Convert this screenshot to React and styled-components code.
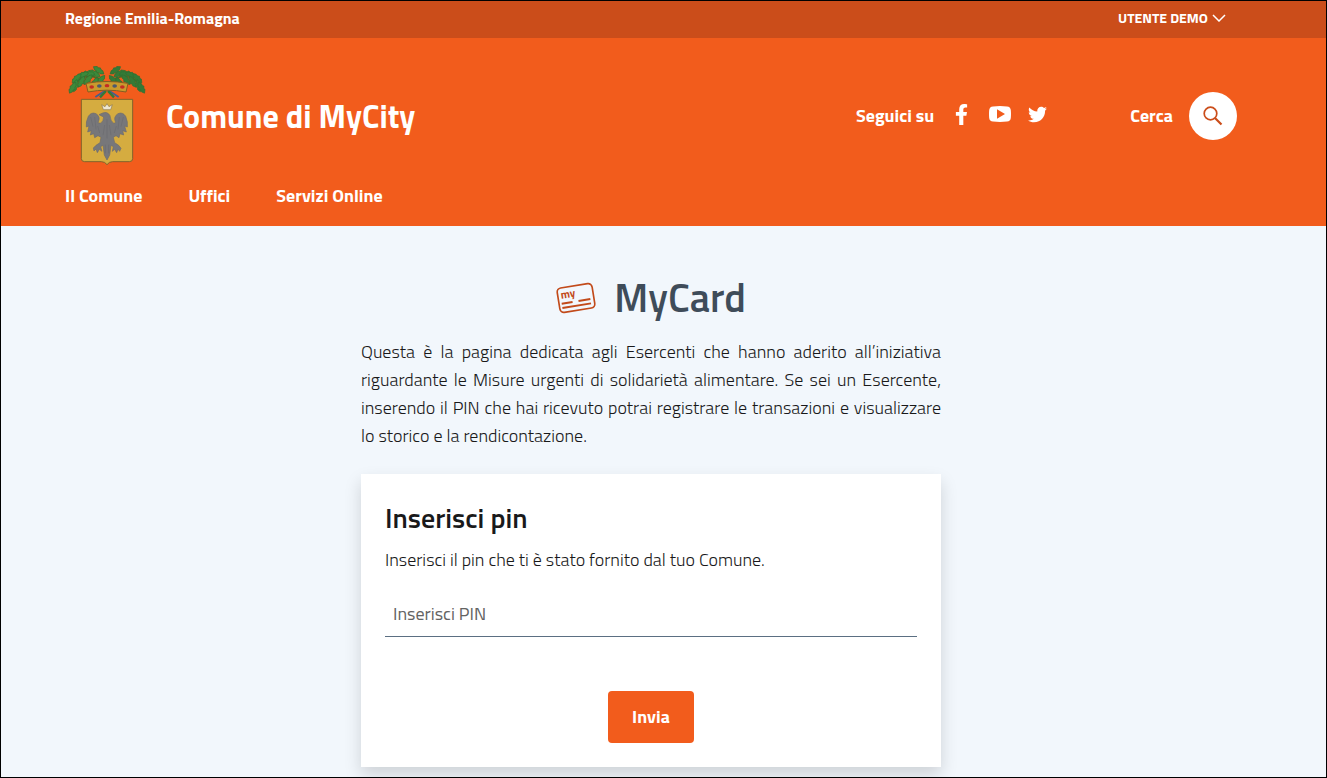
import React, { useState } from 'react';
import styled, { createGlobalStyle, ThemeProvider } from 'styled-components';
import { FaFacebookF, FaTwitter } from 'react-icons/fa';

const theme = {
  primary: '#f25c1c',
  primaryDark: '#cb4d1a',
  iconRed: '#c24a1a',
  white: '#fff',
  text: '#19191a',
  title: '#3f4c59',
  muted: '#636363',
  line: '#5b6f82',
  background: '#f2f7fc',
};

const navigationItems = [
  { label: 'Il Comune', path: '#comune' },
  { label: 'Uffici', path: '#uffici' },
  { label: 'Servizi Online', path: '#servizi' },
];

const GlobalStyle = createGlobalStyle`
  *, *::before, *::after {
    box-sizing: border-box;
  }
  body {
    margin: 0;
    font-family: 'Titillium Web', Roboto, sans-serif;
    font-size: 18px;
    line-height: 28px;
    color: ${props => props.theme.text};
  }
  h1, h2, p {
    margin: 0;
  }
  a {
    color: inherit;
    text-decoration: none;
  }
  button, input {
    font: inherit;
  }
`;

const Page = styled.div`
  min-height: 100vh;
  display: flex;
  flex-direction: column;
  border: 1px solid #000;
  background-color: ${props => props.theme.background};
`;

const Container = styled.div`
  padding: 0 89px 0 64px;
`;

const TopBar = styled.div`
  background-color: ${props => props.theme.primaryDark};
  color: ${props => props.theme.white};
`;

const TopBarContent = styled(Container)`
  display: flex;
  align-items: center;
  justify-content: space-between;
  height: 37px;
  padding-bottom: 4px;
`;

const RegionLink = styled.a`
  font-size: 16px;
  font-weight: 700;
`;

const UserButton = styled.button`
  display: flex;
  align-items: center;
  gap: 4px;
  padding: 0 11px;
  border: none;
  background-color: transparent;
  color: inherit;
  font-size: 14px;
  font-weight: 700;
  text-transform: uppercase;
  cursor: pointer;
`;

const HeaderContainer = styled.header`
  background-color: ${props => props.theme.primary};
  color: ${props => props.theme.white};
  font-weight: 700;
`;

const Brand = styled(Container)`
  display: flex;
  align-items: center;
  justify-content: space-between;
  padding-top: 27px;
`;

const BrandLink = styled.a`
  display: flex;
  align-items: center;
  gap: 19px;
  font-size: 32px;
  line-height: 40px;
`;

const HeaderTools = styled.div`
  display: flex;
  align-items: center;
  gap: 83px;
`;

const Social = styled.div`
  display: flex;
  align-items: center;
`;

const SocialList = styled.ul`
  display: flex;
  align-items: center;
  gap: 17px;
  margin: 0;
  padding: 0 0 4px 17px;
  list-style: none;
`;

const SocialLink = styled.a`
  display: flex;
  justify-content: center;
`;

const Search = styled.div`
  display: flex;
  align-items: center;
  gap: 16px;
`;

const SearchButton = styled.button`
  display: flex;
  align-items: center;
  justify-content: center;
  width: 48px;
  height: 48px;
  padding: 0;
  border: none;
  border-radius: 50%;
  background-color: ${props => props.theme.white};
  color: ${props => props.theme.primaryDark};
  cursor: pointer;
`;

const NavList = styled.ul`
  display: flex;
  gap: 46px;
  margin: 0;
  padding: 15px 0 16px;
  list-style: none;
`;

const Main = styled.main`
  flex: 1;
  padding: 48px 89px 10px 64px;
`;

const Content = styled.div`
  max-width: 580px;
  margin: 0 auto;
`;

const PageTitle = styled.h1`
  display: flex;
  align-items: center;
  justify-content: center;
  gap: 18px;
  margin-bottom: 16px;
  color: ${props => props.theme.title};
  font-size: 40px;
  font-weight: 600;
  line-height: 48px;
`;

const Intro = styled.p`
  margin-bottom: 24px;
  font-weight: 300;
  text-align: justify;
`;

const Card = styled.form`
  display: flex;
  flex-direction: column;
  padding: 24px;
  background-color: ${props => props.theme.white};
  box-shadow: 0 8px 16px rgba(0, 0, 0, 0.15);
`;

const CardTitle = styled.h2`
  margin-bottom: 8px;
  font-size: 28px;
  font-weight: 600;
  line-height: 40px;
`;

const CardLabel = styled.label`
  margin-bottom: 16px;
  font-weight: 300;
`;

const PinInput = styled.input`
  height: 47px;
  margin-bottom: 54px;
  padding: 0 8px;
  border: none;
  border-bottom: 1px solid ${props => props.theme.line};
  outline: none;
  background-color: transparent;
  color: ${props => props.theme.text};
  &::placeholder {
    color: ${props => props.theme.muted};
    opacity: 1;
  }
`;

const SubmitButton = styled.button`
  align-self: center;
  padding: 12px 24px;
  border: none;
  border-radius: 4px;
  background-color: ${props => props.theme.primary};
  color: ${props => props.theme.white};
  font-weight: 700;
  cursor: pointer;
`;

// leaves of the left branch: x, y, rotation
const leftLeaves = [
  [122, 68, -50], [116, 38, 35], [104, 48, 30], [104, 76, -60], [86, 48, 5],
  [84, 66, -50], [68, 52, -20], [64, 72, -60], [50, 62, -45], [46, 84, -75], [38, 90, -60],
];

const Emblem = () => (
  <svg width="82" height="102" viewBox="15 22 246 306" aria-hidden="true">
    {[false, true].map(flip => (
      <g key={String(flip)} transform={flip ? 'translate(282 0) scale(-1 1)' : undefined}>
        <path d="M138 82C110 50 68 44 40 86" fill="none" stroke="#4f6b24" strokeWidth="5" />
        {leftLeaves.map(([x, y, angle]) => (
          <path
            key={`${x}-${y}`}
            d="M-19 0L-10 -7L-6 -5L0 -9L4 -6L11 -6L19 0L10 6L5 5L-1 9L-5 5L-11 6Z"
            transform={`translate(${x} ${y}) rotate(${angle})`}
            fill={flip ? '#347a36' : '#3c8a3a'}
            stroke="#2f7032"
            strokeWidth="2"
          />
        ))}
      </g>
    ))}
    <path d="M106 118L134 100L148 84M176 118L148 100L134 84" fill="none" stroke="#465f8c" strokeWidth="6" />
    <path d="M120 119L138 100M162 119L144 100" fill="none" stroke="#347a36" strokeWidth="7" />
    <path d="M78 77Q141 66 204 77L198 103Q141 92 84 103Z" fill="#c99a2d" stroke="#855d22" strokeWidth="3" />
    {[[95, 88], [118, 85], [141, 84], [164, 85], [187, 88]].map(([x, y], i) => (
      <ellipse key={x} cx={x} cy={y} rx="7" ry="5" fill={i % 2 ? '#4b5a70' : '#c42d24'} />
    ))}
    <path d="M64 125H218V303Q218 312 208 312H158Q147 312 141 321Q135 312 124 312H74Q64 312 64 303Z" fill="#d5ac40" stroke="#80632b" strokeWidth="3" />
    <path d="M130 156L125 141L135 147L141 138L147 147L157 141L152 156Z" fill="#eee7d1" stroke="#8c7850" strokeWidth="2" />
    <path
      d="M117 171L128 166Q142 160 150 174Q151 190 161 197L167 195Q159 177 174 168Q188 162 197 176Q204 192 202 208L194 205L199 223L188 219L191 232L180 228L177 240L168 234L160 239L164 255L176 263L183 272L179 281L174 274L170 285L164 275L157 281L160 267L153 263L149 292L141 307L133 292L129 263L122 267L126 281L118 275L112 285L108 274L102 280L100 271L108 263L120 255L123 239L114 234L104 240L101 228L91 232L94 219L83 223L87 205L79 208Q77 192 85 176Q94 162 108 168Q123 177 114 195L121 197Q131 191 131 178Z"
      fill="#77777a"
      stroke="#6d6b6e"
      strokeWidth="2"
    />
    <path
      d="M92 178L99 207M104 178L108 215M113 205L119 226M190 178L183 207M178 178L174 215M169 205L163 226M141 185V242M134 202L129 233M148 202L153 233M136 261V287M146 261V287"
      fill="none"
      stroke="#6b6b70"
      strokeWidth="2"
    />
  </svg>
);

const CardIcon = () => (
  <svg width="40" height="32" viewBox="0 0 120 96" aria-hidden="true">
    <g transform="rotate(-9 60 48)" fill="none" stroke={theme.iconRed} strokeWidth="5">
      <rect x="7" y="11" width="106" height="74" rx="12" />
      <path d="M15 58H48M66 58H102" strokeWidth="6" />
      <path d="M15 71H102" strokeWidth="6" />
      <text x="16" y="43" fill={theme.iconRed} stroke="none" fontSize="33" fontWeight="700">my</text>
    </g>
  </svg>
);

const YoutubeIcon = () => (
  <svg width="22" height="16" viewBox="0 0 22 16" aria-hidden="true">
    <path
      d="M4 .4Q11-.3 18 .4Q21.500.7 21.800 4Q22.200 8 21.800 12Q21.500 15.300 18 15.600Q11 16.300 4 15.600Q.5 15.300.2 12Q-.2 8 .2 4Q.5.7 4 .4ZM8 3.200V12.800L16 8Z"
      fill="currentColor"
      fillRule="evenodd"
    />
  </svg>
);

const ChevronIcon = () => (
  <svg width="14" height="8" viewBox="0 0 14 8" aria-hidden="true">
    <path d="M1 1L7 7L13 1" fill="none" stroke="currentColor" strokeWidth="1.500" />
  </svg>
);

const SearchIcon = () => (
  <svg width="20" height="20" viewBox="0 0 20 20" fill="none" stroke="currentColor" strokeWidth="1.700" aria-hidden="true">
    <circle cx="7.500" cy="7.500" r="6.300" />
    <path d="M12 12L18.500 18.500" strokeWidth="2.200" />
  </svg>
);

const Header = () => (
  <>
    <TopBar>
      <TopBarContent>
        <RegionLink href="#regione">Regione Emilia-Romagna</RegionLink>
        <UserButton type="button">
          Utente demo
          <ChevronIcon />
        </UserButton>
      </TopBarContent>
    </TopBar>
    <HeaderContainer>
      <Brand>
        <BrandLink href="#home">
          <Emblem />
          Comune di MyCity
        </BrandLink>
        <HeaderTools>
          <Social>
            Seguici su
            <SocialList>
              <li><SocialLink href="#facebook" aria-label="Facebook"><FaFacebookF size={21} /></SocialLink></li>
              <li><SocialLink href="#youtube" aria-label="YouTube"><YoutubeIcon /></SocialLink></li>
              <li><SocialLink href="#twitter" aria-label="Twitter"><FaTwitter size={19} /></SocialLink></li>
            </SocialList>
          </Social>
          <Search>
            Cerca
            <SearchButton type="button" aria-label="Cerca"><SearchIcon /></SearchButton>
          </Search>
        </HeaderTools>
      </Brand>
      <Container as="nav">
        <NavList>
          {navigationItems.map(item => (
            <li key={item.label}>
              <a href={item.path}>{item.label}</a>
            </li>
          ))}
        </NavList>
      </Container>
    </HeaderContainer>
  </>
);

const App = () => {
  const [pin, setPin] = useState('');

  return (
    <ThemeProvider theme={theme}>
      <GlobalStyle />
      <Page>
        <Header />
        <Main>
          <Content>
            <PageTitle>
              <CardIcon />
              MyCard
            </PageTitle>
            <Intro>
              Questa è la pagina dedicata agli Esercenti che hanno aderito all’iniziativa riguardante le
              Misure urgenti di solidarietà alimentare. Se sei un Esercente, inserendo il PIN che hai
              ricevuto potrai registrare le transazioni e visualizzare lo storico e la rendicontazione.
            </Intro>
            <Card onSubmit={e => e.preventDefault()}>
              <CardTitle>Inserisci pin</CardTitle>
              <CardLabel htmlFor="pin">Inserisci il pin che ti è stato fornito dal tuo Comune.</CardLabel>
              <PinInput
                id="pin"
                type="text"
                placeholder="Inserisci PIN"
                value={pin}
                onChange={e => setPin(e.target.value)}
              />
              <SubmitButton type="submit">Invia</SubmitButton>
            </Card>
          </Content>
        </Main>
      </Page>
    </ThemeProvider>
  );
};

export default App;
